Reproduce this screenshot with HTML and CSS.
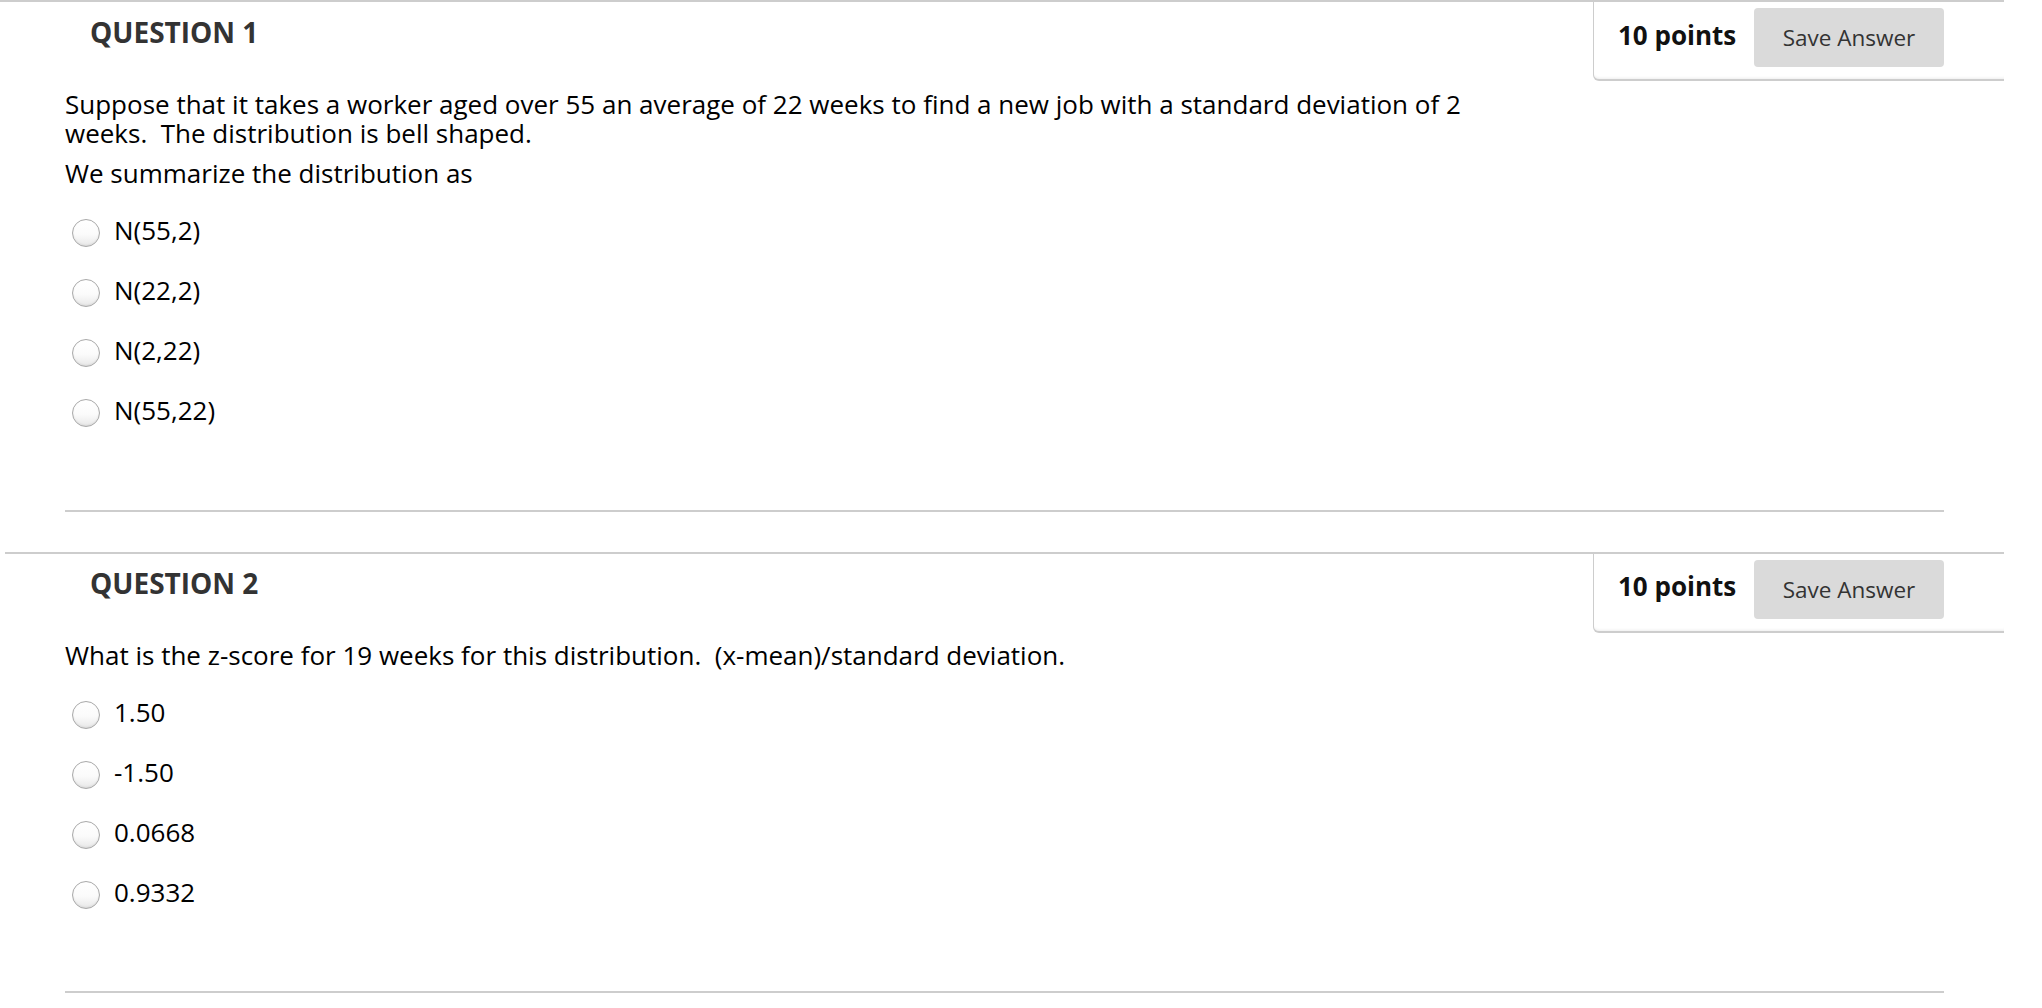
FILE: index.html
```html
<!DOCTYPE html>
<html lang="en">
<head>
    <meta charset="UTF-8">
    <title>Test</title>
    <link rel="stylesheet" href="styles.css">
</head>
<body>
    <div class="quiz">
        <div class="question">
            <div class="question-header">
                <h3 class="question-title">QUESTION 1</h3>
                <div class="points-box">
                    <span class="points">10 points</span>
                    <button class="save-button">Save Answer</button>
                </div>
            </div>
            <div class="question-body">
                <div class="question-text">
                    <p>Suppose that it takes a worker aged over 55 an average of 22 weeks to find a new job with a standard deviation of 2<br>weeks.&nbsp; The distribution is bell shaped.</p>
                    <p>We summarize the distribution as</p>
                </div>
                <ul class="choices">
                    <li class="choice"><input type="radio" name="q1" class="choice-input"><span>N(55,2)</span></li>
                    <li class="choice"><input type="radio" name="q1" class="choice-input"><span>N(22,2)</span></li>
                    <li class="choice"><input type="radio" name="q1" class="choice-input"><span>N(2,22)</span></li>
                    <li class="choice"><input type="radio" name="q1" class="choice-input"><span>N(55,22)</span></li>
                </ul>
            </div>
        </div>

        <div class="question">
            <div class="question-header">
                <h3 class="question-title">QUESTION 2</h3>
                <div class="points-box">
                    <span class="points">10 points</span>
                    <button class="save-button">Save Answer</button>
                </div>
            </div>
            <div class="question-body">
                <div class="question-text">
                    <p>What is the z-score for 19 weeks for this distribution.&nbsp; (x-mean)/standard deviation.</p>
                </div>
                <ul class="choices">
                    <li class="choice"><input type="radio" name="q2" class="choice-input"><span>1.50</span></li>
                    <li class="choice"><input type="radio" name="q2" class="choice-input"><span>-1.50</span></li>
                    <li class="choice"><input type="radio" name="q2" class="choice-input"><span>0.0668</span></li>
                    <li class="choice"><input type="radio" name="q2" class="choice-input"><span>0.9332</span></li>
                </ul>
            </div>
        </div>
    </div>
</body>
</html>
```

FILE: styles.css
```css
* {
    box-sizing: border-box;
}

body {
    margin: 0;
    padding: 0;
    background-color: #fff;
    color: #000;
    font-family: "Open Sans", "Liberation Sans", sans-serif;
}

.question {
    margin: 0 38px 40px 5px;
    border-top: 2px solid #cdcdcd;
}

.question:first-child {
    margin-left: 0;
    padding-left: 5px;
}

.question-header {
    display: flex;
    justify-content: space-between;
    align-items: flex-start;
}

.question-title {
    margin: 10.6px 0 0 85px;
    font-size: 28px;
    line-height: 38px;
    font-weight: 700;
    color: #333;
}

.points-box {
    width: 411px;
    height: 79px;
    display: flex;
    align-items: flex-start;
    padding: 6.3px 60px 0 24px;
    border-left: 1px solid #cdcdcd;
    border-bottom: 2px solid #cdcdcd;
    border-bottom-left-radius: 6px;
    box-shadow: inset 0 -3px 3px -2px rgba(0, 0, 0, 0.07);
}

.points {
    margin-top: 11.6px;
    font-size: 26px;
    line-height: 30px;
    font-weight: 700;
    color: #111;
    white-space: nowrap;
}

.save-button {
    margin-left: auto;
    width: 190px;
    height: 59px;
    padding: 0;
    border: none;
    border-radius: 4px;
    background-color: #dadada;
    color: #333;
    font-family: inherit;
    font-size: 22.5px;
    cursor: pointer;
}

.question-body {
    margin: 8.5px 60px 0 60px;
    padding-bottom: 68.8px;
    border-bottom: 2px solid #cdcdcd;
}

.question-text p {
    margin: 0;
    font-size: 26px;
    line-height: 29.4px;
}

.question-text p + p {
    margin-top: 11px;
}

.choices {
    list-style: none;
    margin: 12px 0 0;
    padding: 0;
}

.choice {
    display: flex;
    align-items: center;
    height: 60px;
    font-size: 26px;
    line-height: 29.4px;
}

.choice-input {
    appearance: none;
    -webkit-appearance: none;
    width: 28px;
    height: 28px;
    margin: 4.2px 14px 0 7px;
    border: 1px solid #a9a9a9;
    border-radius: 50%;
    background: linear-gradient(#fff, #fbfbfb 55%, #e8e8e8);
    box-shadow: inset 0 -1px 2px rgba(0, 0, 0, 0.08);
    flex-shrink: 0;
}
```
